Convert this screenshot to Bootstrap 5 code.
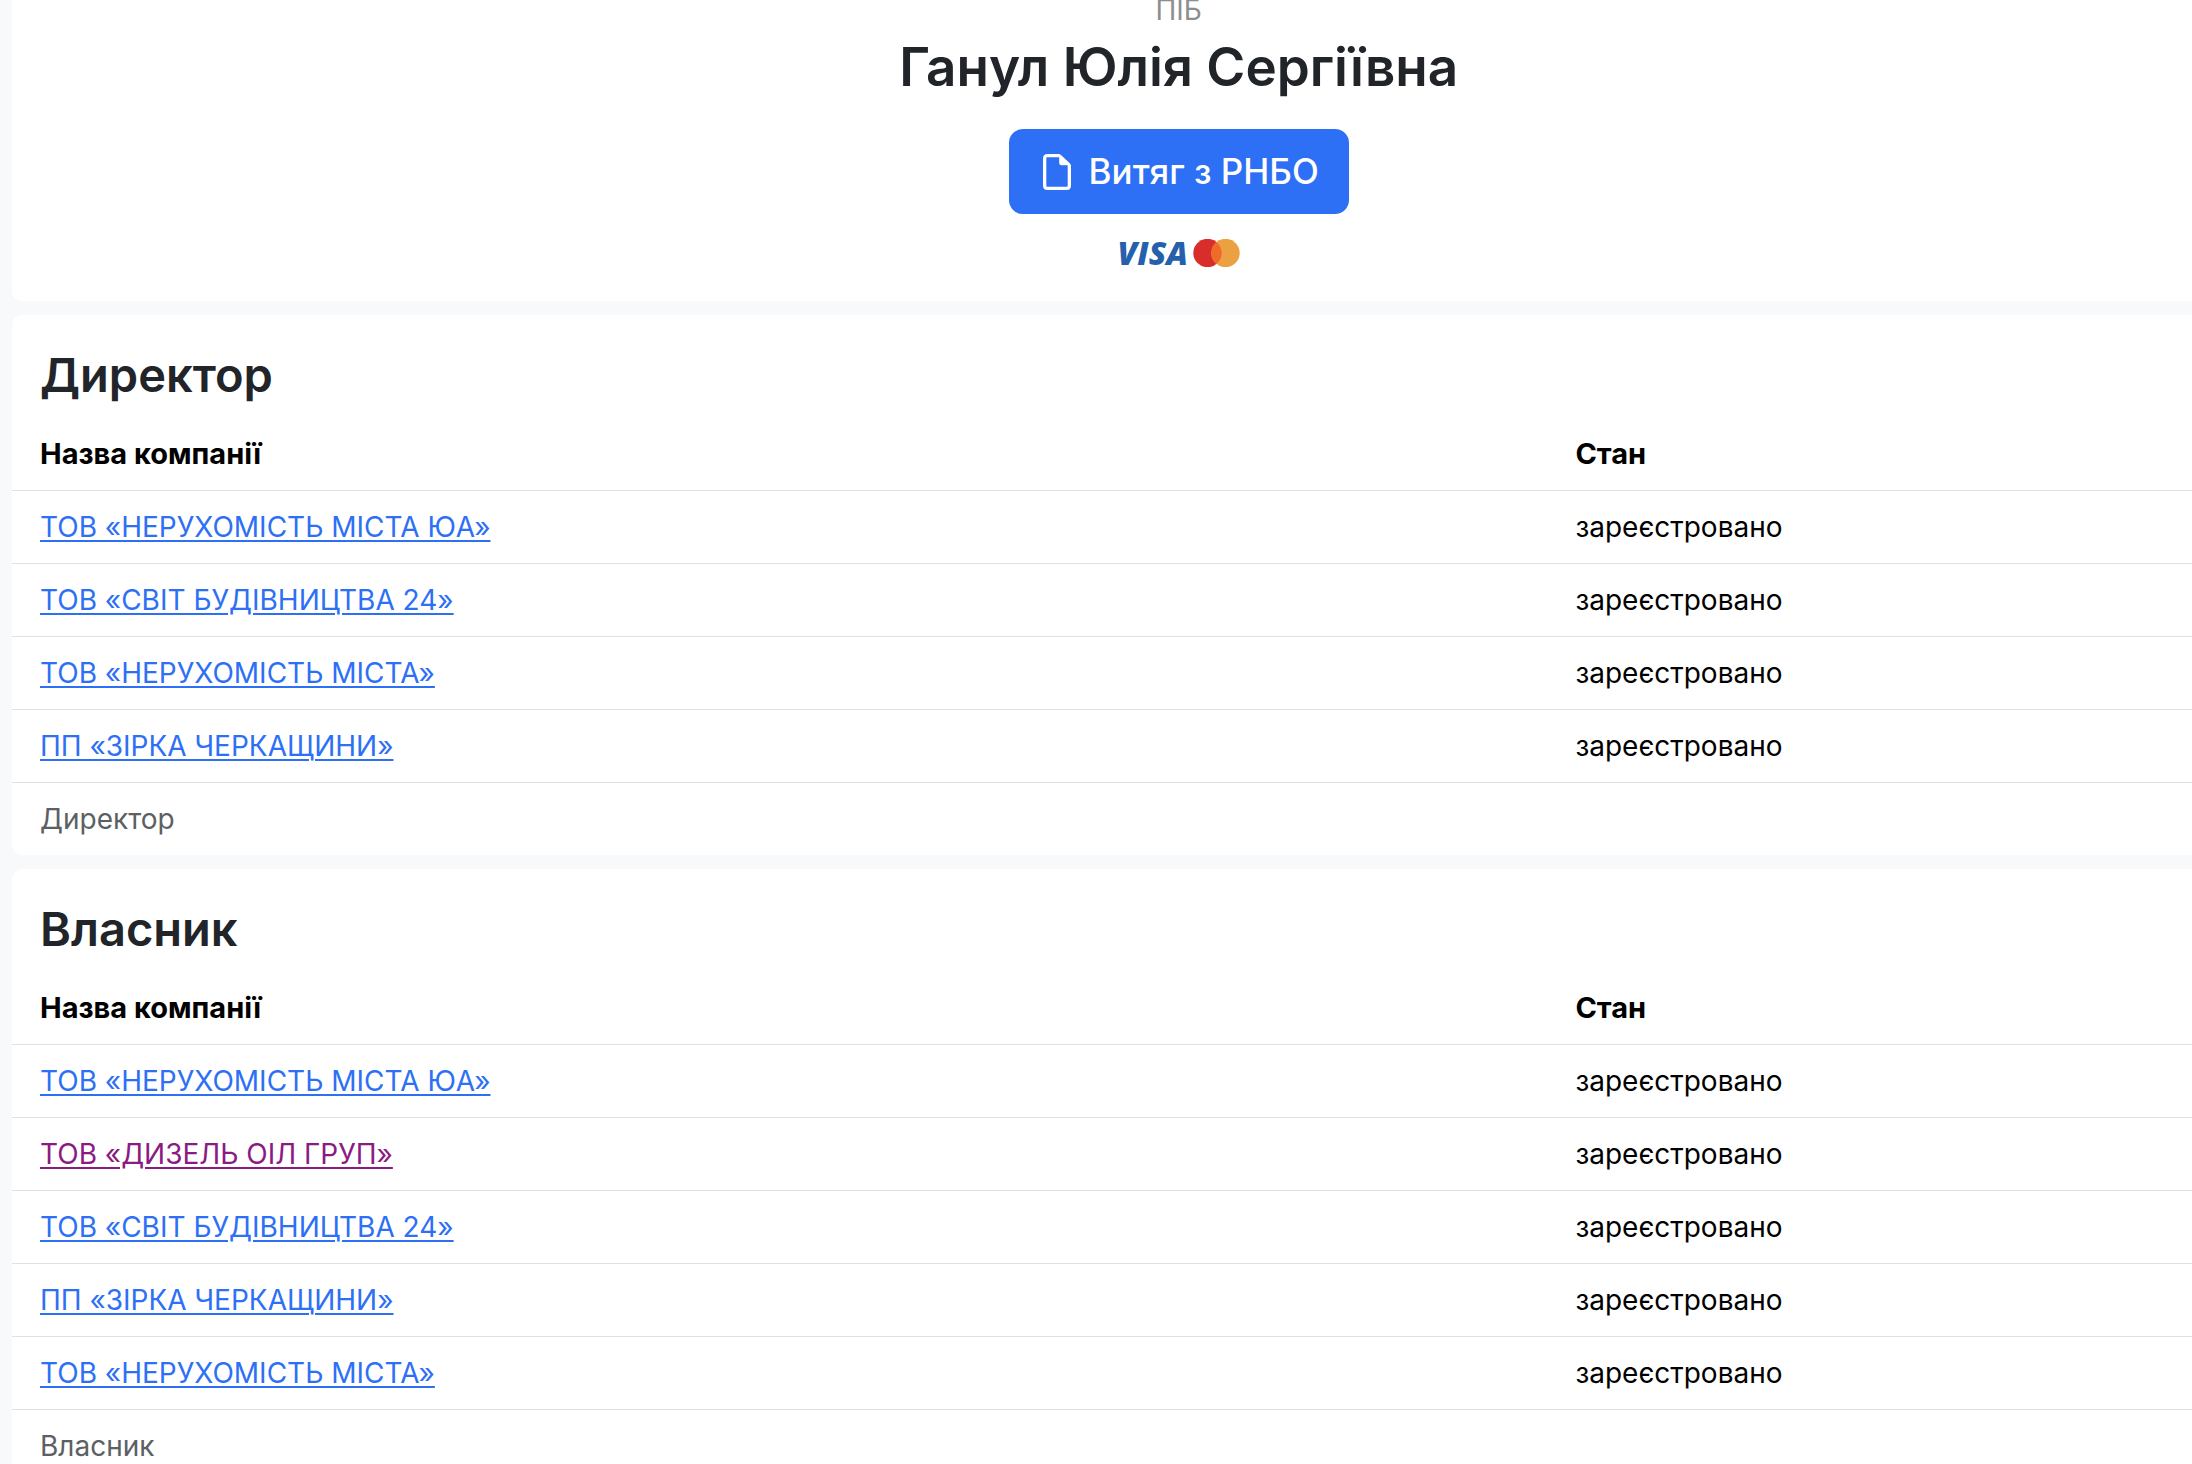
<!DOCTYPE html>
<html lang="uk">
<head>
<meta charset="utf-8">
<meta name="viewport" content="width=device-width, initial-scale=1">
<title>Ганул Юлія Сергіївна</title>
<link href="https://cdn.jsdelivr.net/npm/bootstrap@5.3.0/dist/css/bootstrap.min.css" rel="stylesheet">
<style>
  body { font-family: Inter, "Liberation Sans", sans-serif; font-size: 28px; line-height: 44px; background: #f8f9fb; }
  .page-wide { width: 107%; padding-left: 12px; gap: 14px; }
  .panel { background: #fff; border-radius: 10px; overflow: hidden; }
  .person { border-radius: 0 0 10px 10px; padding-bottom: 34px; }
  .person-label { color: #8e8e90; line-height: 20px; }
  .person-name { font-size: 53px; font-weight: 600; line-height: 70px; margin: 12px 0 27px; }
  .btn-extract { --bs-btn-bg: #2d70f5; --bs-btn-border-color: #2d70f5; --bs-btn-color: #fff; font-size: 35px; line-height: 53px; padding: 14px 28px; border-width: 2px; border-radius: 14px; gap: 14px; }
  .pay-marks { margin-top: 25px; height: 28px; gap: 5px; }
  .visa-mark { font: italic 800 32px/28px "Open Sans", sans-serif; color: #2660ad; }
  .panel-title { font-size: 47px; font-weight: 600; line-height: 60px; padding: 30px 28px 13px; }
  .companies { table-layout: fixed; --bs-table-color: #000; --bs-table-bg: #fff; border-color: #dee2e6; }
  .companies > :not(caption) > * > * { padding: 14px 28px; }
  .companies th { font-size: 29px; }
  .companies tfoot td { color: #5c6063; border-bottom: 0; }
  .col-name { width: 65.8%; }
  .companies a { color: #2d70f5; text-decoration-thickness: 2px; text-underline-offset: 3px; }
  .companies a.seen { color: #8a1b82; }
</style>
<script src="https://cdn.jsdelivr.net/npm/bootstrap@5.3.0/dist/js/bootstrap.bundle.min.js"></script>
</head>
<body class="vh-100 overflow-hidden">
<main class="page-wide d-flex flex-column">
  <section class="panel person d-flex flex-column align-items-center">
    <div class="person-label">ПІБ</div>
    <h1 class="person-name">Ганул Юлія Сергіївна</h1>
    <button type="button" class="btn btn-primary btn-extract fw-medium d-inline-flex align-items-center">
      <svg width="36" height="36" viewBox="0 0 36 36" fill="currentColor" fill-rule="evenodd" aria-hidden="true"><path d="M8.500 0H19.500Q21 0 22 1L31 9.500Q32 10.500 32 12V31.500Q32 36 27.500 36H8.500Q4 36 4 31.500V4.500Q4 0 8.500 0zM8.300 3.200Q7.300 3.200 7.300 4.200V31.800Q7.300 32.800 8.300 32.800H27.700Q28.700 32.800 28.700 31.800V11.300H22.500Q20.200 11.300 20.200 9V3.200z"/></svg>
      <span>Витяг з РНБО</span>
    </button>
    <div class="pay-marks d-flex align-items-center">
      <span class="visa-mark">VISA</span>
      <svg width="47" height="28" viewBox="0 0 47 28" role="img" aria-label="Mastercard"><circle cx="14.500" cy="14" r="14.200" fill="#d92d2b"/><circle cx="32.500" cy="14" r="14.200" fill="#eba141"/><path d="M23.500 3a14.200 14.200 0 0 1 0 22a14.200 14.200 0 0 1 0-22z" fill="#ef6b2c"/></svg>
    </div>
  </section>

  <section class="panel">
    <h2 class="panel-title mb-0">Директор</h2>
    <table class="table companies mb-0">
      <thead><tr><th scope="col" class="col-name">Назва компанії</th><th scope="col">Стан</th></tr></thead>
      <tbody>
        <tr><td><a href="#">ТОВ «НЕРУХОМІСТЬ МІСТА ЮА»</a></td><td>зареєстровано</td></tr>
        <tr><td><a href="#">ТОВ «СВІТ БУДІВНИЦТВА 24»</a></td><td>зареєстровано</td></tr>
        <tr><td><a href="#">ТОВ «НЕРУХОМІСТЬ МІСТА»</a></td><td>зареєстровано</td></tr>
        <tr><td><a href="#">ПП «ЗІРКА ЧЕРКАЩИНИ»</a></td><td>зареєстровано</td></tr>
      </tbody>
      <tfoot><tr><td colspan="2">Директор</td></tr></tfoot>
    </table>
  </section>

  <section class="panel">
    <h2 class="panel-title mb-0">Власник</h2>
    <table class="table companies mb-0">
      <thead><tr><th scope="col" class="col-name">Назва компанії</th><th scope="col">Стан</th></tr></thead>
      <tbody>
        <tr><td><a href="#">ТОВ «НЕРУХОМІСТЬ МІСТА ЮА»</a></td><td>зареєстровано</td></tr>
        <tr><td><a href="#" class="seen">ТОВ «ДИЗЕЛЬ ОІЛ ГРУП»</a></td><td>зареєстровано</td></tr>
        <tr><td><a href="#">ТОВ «СВІТ БУДІВНИЦТВА 24»</a></td><td>зареєстровано</td></tr>
        <tr><td><a href="#">ПП «ЗІРКА ЧЕРКАЩИНИ»</a></td><td>зареєстровано</td></tr>
        <tr><td><a href="#">ТОВ «НЕРУХОМІСТЬ МІСТА»</a></td><td>зареєстровано</td></tr>
      </tbody>
      <tfoot><tr><td colspan="2">Власник</td></tr></tfoot>
    </table>
  </section>
</main>
</body>
</html>
